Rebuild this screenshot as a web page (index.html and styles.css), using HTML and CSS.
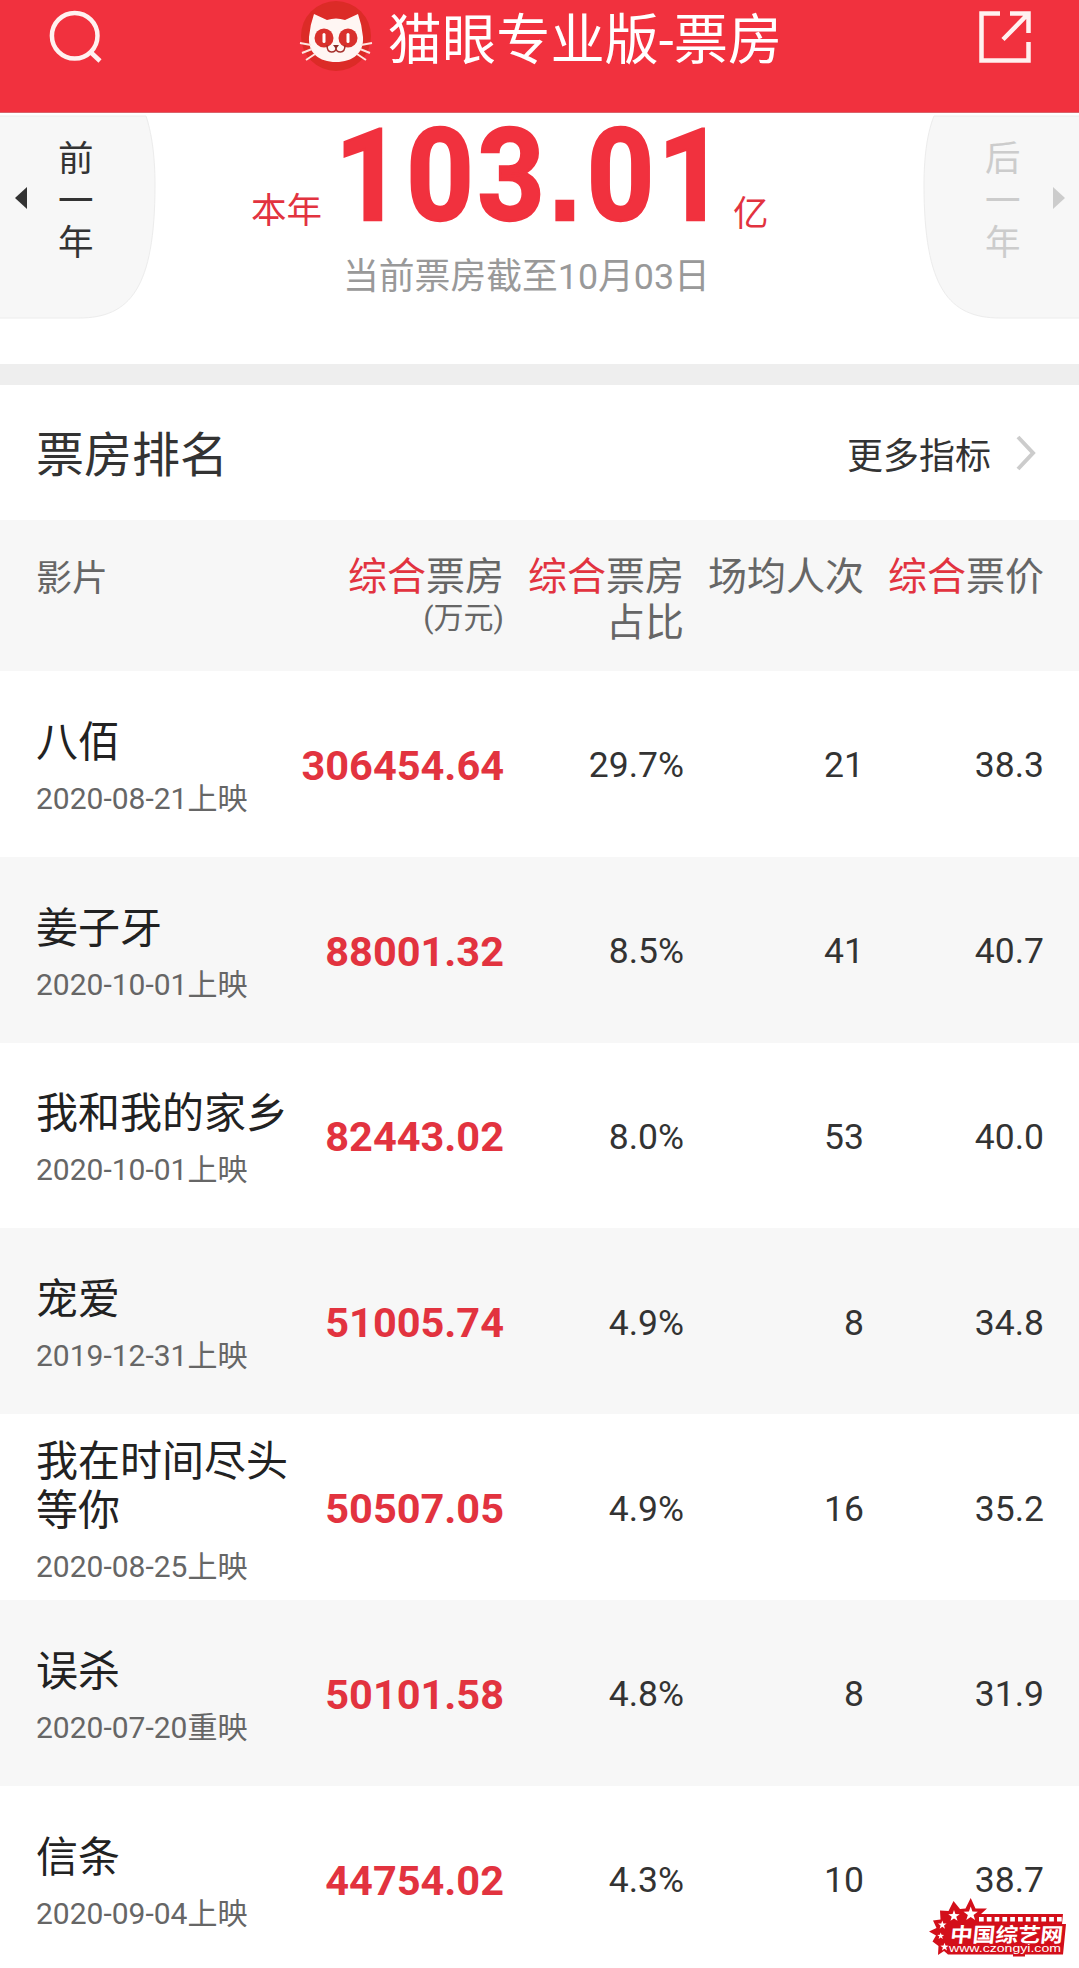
FILE: index.html
```html
<!DOCTYPE html>
<html lang="zh-CN">
<head>
<meta charset="utf-8">
<title>猫眼专业版-票房</title>
<link rel="stylesheet" href="styles.css">
</head>
<body>
<header class="topbar">
  <svg class="icon-search" viewBox="0 0 56 56"><circle cx="26.7" cy="26.7" r="22.8"/><path d="M43 43.5 52 52"/></svg>
  <div class="brand">
    <svg class="logo" viewBox="0 0 74 74">
      <circle cx="37" cy="36" r="35" fill="#dc2b27"/>
      <path d="M15 14 28 20Q37 17 46 20L59 14Q63 25 64 37C65 53 54 62 37 62S9 53 10 37Q11 25 15 14Z" fill="#fff6f3"/>
      <path d="M1 43 12 45M3 53 13 49M7 60 16 54M73 43 62 45M71 53 61 49M67 60 58 54" stroke="#ffe4df" stroke-width="2" fill="none"/>
      <circle cx="25" cy="38" r="9.500" fill="#d9302c"/><circle cx="49" cy="38" r="9.500" fill="#d9302c"/>
      <rect x="23.500" y="33" width="3" height="10" rx="1.500" fill="#fff"/><rect x="47.500" y="33" width="3" height="10" rx="1.500" fill="#fff"/>
      <path d="M28 45Q28 52 32.500 52T37 48Q37 52 41.500 52T46 45" stroke="#a5302c" stroke-width="1.500" fill="none"/>
      <path d="M34 45H40L37 49Z" fill="#8c2a28"/>
    </svg>
    <h1 class="title">猫眼专业版-票房</h1>
  </div>
  <svg class="icon-share" viewBox="0 0 56 56"><path d="M23 4.500H4.500V51.500H51.500V33M33 4.500H51.500V24M51.500 4.500 26 30.500"/></svg>
</header>

<section class="summary">
  <div class="year year-prev">
    <svg class="year-bg" viewBox="0 0 156 206"><path d="M0 3H146C151 18 155 40 155 72C155 175 130 205 79 205H0"/></svg>
    <svg class="arrow" viewBox="0 0 12 22"><path d="M12 0V22L0 11Z"/></svg>
    <span class="year-label">前一年</span>
  </div>
  <div class="total">
    <div class="total-line">
      <span class="total-year">本年</span>
      <span class="total-value">103<span class="dot">.</span>01</span>
      <span class="total-unit">亿</span>
    </div>
    <p class="total-note">当前票房截至10月03日</p>
  </div>
  <div class="year year-next">
    <svg class="year-bg" viewBox="0 0 156 206"><path d="M156 3H11C5 18 1 40 1 72C1 175 26 205 77 205H156"/></svg>
    <span class="year-label">后一年</span>
    <svg class="arrow" viewBox="0 0 12 22"><path d="M0 0V22L12 11Z"/></svg>
  </div>
</section>

<section class="ranking">
  <div class="ranking-head">
    <h2 class="ranking-title">票房排名</h2>
    <a class="more">更多指标<svg class="chevron" viewBox="0 0 22 36"><path d="M3 2 18 18 3 34"/></svg></a>
  </div>
  <div class="row thead">
    <div class="first">影片</div>
    <div><em>综合</em>票房<small>(万元)</small></div>
    <div><em>综合</em>票房<br>占比</div>
    <div>场均人次</div>
    <div><em>综合</em>票价</div>
  </div>
  <div class="row"><div class="film"><b>八佰</b><span>2020-08-21上映</span></div><div class="gross">306454.64</div><div>29.7%</div><div>21</div><div>38.3</div></div>
  <div class="row"><div class="film"><b>姜子牙</b><span>2020-10-01上映</span></div><div class="gross">88001.32</div><div>8.5%</div><div>41</div><div>40.7</div></div>
  <div class="row"><div class="film"><b>我和我的家乡</b><span>2020-10-01上映</span></div><div class="gross">82443.02</div><div>8.0%</div><div>53</div><div>40.0</div></div>
  <div class="row"><div class="film"><b>宠爱</b><span>2019-12-31上映</span></div><div class="gross">51005.74</div><div>4.9%</div><div>8</div><div>34.8</div></div>
  <div class="row"><div class="film"><b>我在时间尽头等你</b><span>2020-08-25上映</span></div><div class="gross">50507.05</div><div>4.9%</div><div>16</div><div>35.2</div></div>
  <div class="row"><div class="film"><b>误杀</b><span>2020-07-20重映</span></div><div class="gross">50101.58</div><div>4.8%</div><div>8</div><div>31.9</div></div>
  <div class="row"><div class="film"><b>信条</b><span>2020-09-04上映</span></div><div class="gross">44754.02</div><div>4.3%</div><div>10</div><div>38.7</div></div>
</section>

<svg class="watermark" viewBox="0 0 140 62">
  <path d="M11 12.500 19.500 13 24.500 3 31 11 36.500 10.500 41.700 0 46.500 10.500H58L52 16H134L133 26H137L134 56.500H96V58.500H84V56.500H19L15 53 9 57 9.500 48 3.500 43.500 7 37.500 0 33.500 7.500 30 4 22.500 11.500 21.500Z" fill="#d30f1a"/>
  <g fill="#fff">
    <path transform="translate(41.700 16) scale(7.500)" d="M0-1 .235-.324 .951-.309 .38.124 .588.809 0 .4-.588.809-.38.124-.951-.309-.235-.324Z"/>
    <path transform="translate(25 18) scale(6)" d="M0-1 .235-.324 .951-.309 .38.124 .588.809 0 .4-.588.809-.38.124-.951-.309-.235-.324Z"/>
    <path transform="translate(13.300 27) scale(4.500)" d="M0-1 .235-.324 .951-.309 .38.124 .588.809 0 .4-.588.809-.38.124-.951-.309-.235-.324Z"/>
    <path transform="translate(11.700 38) scale(3.600)" d="M0-1 .235-.324 .951-.309 .38.124 .588.809 0 .4-.588.809-.38.124-.951-.309-.235-.324Z"/>
    <path transform="translate(15.500 49) scale(4.300)" d="M0-1 .235-.324 .951-.309 .38.124 .588.809 0 .4-.588.809-.38.124-.951-.309-.235-.324Z"/>
  </g>
  <path d="M50 21.300H133" stroke="#fff" stroke-width="4.500" stroke-dasharray="4.700 3.100"/>
  <text class="wm-name" transform="translate(20.500 43.500) skewX(-6) scale(1.130 1)">中国综艺网</text>
  <text class="wm-url" x="20" y="54" textLength="112" lengthAdjust="spacingAndGlyphs">www.czongyi.com</text>
</svg>
</body>
</html>
```
FILE: styles.css
```css
* { box-sizing: border-box; }
body {
  margin: 0;
  width: 1079px;
  height: 1968px;
  overflow: hidden;
  position: relative;
  background: #fff;
  color: #333;
  font-family: Roboto, "Noto Sans CJK SC", sans-serif;
  font-size: 35.5px;
}
h1, h2, p { margin: 0; font-weight: 400; }

.topbar {
  height: 113px;
  padding: 9px 46px 0 48px;
  display: flex;
  justify-content: space-between;
  align-items: flex-start;
  background: #f1313e;
  border-bottom: 1px solid #d9636b;
}
.icon-search, .icon-share { width: 56px; height: 56px; fill: none; stroke: #fff1f0; stroke-width: 4.500px; }
.brand { display: flex; margin-top: -9px; }
.logo { width: 74px; height: 74px; }
.title { margin: 0 0 0 15px; color: #fff; font-size: 54.200px; line-height: 82px; white-space: nowrap; }

.summary { height: 251px; display: flex; }
.year { position: relative; flex: none; width: 156px; height: 206px; display: flex; align-items: flex-start; }
.year-bg { position: absolute; left: 0; top: 0; width: 156px; height: 206px; fill: #f7f7f7; stroke: #ececec; stroke-width: 1px; }
.arrow { position: relative; width: 12px; height: 22px; margin-top: 74px; fill: #333; }
.year-label { position: relative; width: 36px; font-size: 35.500px; line-height: 41.800px; margin-top: 26px; }
.year-prev { padding-left: 15px; gap: 31px; }
.year-next { padding-left: 62px; gap: 32px; color: #ccc; }
.year-next .arrow { fill: #ccc; }

.total { flex: 1; }
.total-line { height: 132px; padding-left: 95px; display: flex; align-items: flex-start; color: #e2333f; white-space: nowrap; line-height: 40px; }
.total-year { width: 84px; margin-top: 78px; }
.total-value {
  width: 398px;
  margin-top: 3px;
  font-size: 128px;
  line-height: 120px;
  font-weight: 700;
  color: #f1313e;
  letter-spacing: 3.900px;
  -webkit-text-stroke: 2.400px #f1313e;
  transform: scaleX(.92);
  transform-origin: left;
}
.dot { font-family: "Liberation Sans", sans-serif; letter-spacing: 6px; }
.total-unit { margin-top: 81px; }
.total-note { color: #999; font-size: 35.800px; line-height: 64px; padding-left: 187px; }

.ranking { border-top: 21px solid #eee; }
.ranking-head { height: 135px; padding: 0 42px 0 36px; display: flex; align-items: center; justify-content: space-between; }
.ranking-title { margin-bottom: 4px; font-size: 48px; }
.more { display: flex; align-items: center; gap: 24px; font-size: 36px; }
.chevron { width: 22px; height: 36px; fill: none; stroke: #ccc; stroke-width: 4px; }

.row {
  height: 185.800px;
  padding: 3px 35px 0 36px;
  display: grid;
  grid-template-columns: 1fr 210px 180px 180px 180px;
  align-items: center;
  text-align: right;
}
.row:nth-child(even) { background: #f7f7f7; }
.row:nth-child(odd) { background: #fff; }
.row.thead { height: 151px; padding-top: 34px; align-items: start; background: #f7f7f7; color: #666; font-size: 39px; line-height: 46px; }
.thead .first { text-align: left; font-size: 36px; line-height: 50px; }
.thead em { font-style: normal; color: #e2333f; }
.thead small { display: block; font-size: 30px; line-height: 36px; }
.film { padding-top: 4px; text-align: left; white-space: nowrap; }
.film b { display: block; width: 254px; white-space: normal; font-weight: 400; font-size: 42px; line-height: 49px; color: #222; }
.film span { display: block; margin-top: 14px; font-size: 30px; line-height: 36px; color: #666; }
.gross { font-size: 41.500px; font-weight: 700; color: #e2333f; }

.watermark { position: absolute; left: 929px; top: 1898px; width: 140px; height: 62px; }
.wm-name { font: 700 20px "Noto Sans CJK SC", sans-serif; fill: #fff; }
.wm-url { font: 11.200px "Liberation Sans", sans-serif; fill: #fff; }
```
